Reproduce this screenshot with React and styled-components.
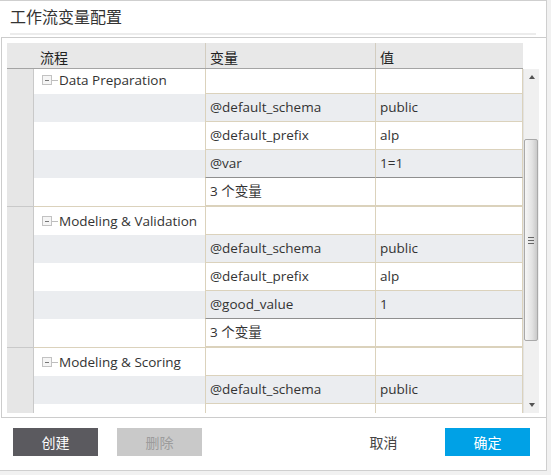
import styled, { createGlobalStyle } from "styled-components";

const GlobalStyle = createGlobalStyle`
  html, body {
    margin: 0;
    padding: 0;
    background: #f1f1f1;
  }
  body {
    font-family: "Open Sans", "Noto Sans CJK SC", sans-serif;
    color: #333;
  }
`;

const groups = [
  {
    name: "Data Preparation",
    vars: [
      ["@default_schema", "public"],
      ["@default_prefix", "alp"],
      ["@var", "1=1"],
    ],
    summary: "3 个变量",
  },
  {
    name: "Modeling & Validation",
    vars: [
      ["@default_schema", "public"],
      ["@default_prefix", "alp"],
      ["@good_value", "1"],
    ],
    summary: "3 个变量",
  },
  {
    name: "Modeling & Scoring",
    vars: [
      ["@default_schema", "public"],
      ["", ""],
    ],
  },
];

const BEIGE = "#dbd2bc";

const Dialog = styled.div`
  box-sizing: border-box;
  width: 547px;
  height: 471px;
  background: #fff;
  border: 1px solid #cfcfcf;
  border-left: none;
  display: flex;
  flex-direction: column;
`;

const Title = styled.div`
  height: 32px;
  line-height: 32px;
  padding-left: 10px;
  font-size: 16px;
  color: #333;
`;

const Divider = styled.div`
  height: 2px;
  width: 526px;
  margin: 0 0 2px 10px;
  background: #ececec;
`;

const Panel = styled.div`
  margin-left: 1px;
  padding: 5px 7px 4px 5px;
  border: 1px solid #cccccc;
  border-right: none;
`;

const Grid = styled.div`
  display: flex;
  flex-direction: column;
  height: 370px;
  width: 532px;
  font-size: 13.5px;
`;

const HeaderRow = styled.div`
  display: flex;
  width: 516px;
  height: 25px;
  background: #e8e8e8;
  border-bottom: 1px solid #a4a4a4;
`;

const HeadCell = styled.div`
  box-sizing: border-box;
  width: ${(p) => p.$w}px;
  padding-left: ${(p) => p.$pad}px;
  padding-top: 2px;
  line-height: 25px;
  font-size: 14px;
  border-left: ${(p) => (p.$line ? "1px solid #d3cdc0" : "none")};
  color: #222;
`;

const Body = styled.div`
  display: flex;
  flex: 1;
  min-height: 0;
`;

const Viewport = styled.div`
  width: 516px;
  overflow: hidden;
`;

const Content = styled.div`
  margin-top: -3px;
`;

const Row = styled.div`
  display: flex;
  height: 28px;
`;

const Gutter = styled.div`
  box-sizing: border-box;
  width: 27px;
  background: #e6e6e6;
  border-right: 1px solid #c9c9c9;
`;

const NameCell = styled.div`
  box-sizing: border-box;
  width: 171px;
  display: flex;
  align-items: center;
  padding-left: 8px;
  background: ${(p) => (p.$stripe ? "#ebedf0" : "#fff")};
  color: #333;
  white-space: nowrap;
`;

const ValueCell = styled.div`
  box-sizing: border-box;
  width: ${(p) => p.$w}px;
  padding-left: 4px;
  line-height: 27px;
  background: ${(p) => (p.$stripe ? "#ebedf0" : "#fff")};
  border-left: 1px solid ${BEIGE};
  border-right: ${(p) => (p.$edge ? `1px solid ${BEIGE}` : "none")};
  border-bottom: 1px solid ${(p) => (p.$last ? "#8f8f8f" : BEIGE)};
  color: #333;
  white-space: nowrap;
`;

const Sep = styled.div`
  display: flex;
  height: 1px;
`;

const SepGutter = styled.div`
  width: 27px;
  background: #c9c9c9;
`;

const SepLine = styled.div`
  flex: 1;
  background: ${BEIGE};
`;

const ToggleBox = styled.span`
  box-sizing: border-box;
  position: relative;
  width: 10px;
  height: 10px;
  border: 1px solid #c2c2c2;
  background: #f5f5f5;
  flex: none;

  &::before {
    content: "";
    position: absolute;
    left: 2px;
    top: 3.5px;
    width: 4px;
    height: 1px;
    background: #777;
  }
`;

const TreeLine = styled.span`
  width: 6px;
  height: 1px;
  background: #bdbdbd;
  margin-right: 1px;
  flex: none;
`;

const ScrollBar = styled.div`
  box-sizing: border-box;
  width: 16px;
  background: #f0f0f0;
  border-left: 1px solid #e2e2e2;
  display: flex;
  flex-direction: column;
`;

const Arrow = styled.div`
  height: 16px;
  display: flex;
  align-items: center;
  justify-content: center;

  &::after {
    content: "";
    border-left: 3.5px solid transparent;
    border-right: 3.5px solid transparent;
    ${(p) =>
      p.$down
        ? "border-top: 4px solid #555;"
        : "border-bottom: 4px solid #555;"}
  }
`;

const Track = styled.div`
  flex: 1;
  display: flex;
  flex-direction: column;
  padding-top: ${(p) => p.$offset}px;
`;

const Thumb = styled.div`
  box-sizing: border-box;
  width: 14px;
  height: 202px;
  border: 1px solid #a9a9a9;
  border-radius: 2px;
  background: linear-gradient(to right, #f6f6f6, #e2e2e2 60%, #c9c9c9);
  display: flex;
  align-items: center;
  justify-content: center;
`;

const Grip = styled.div`
  width: 6px;
  height: 5px;
  border-top: 1px solid #666;
  border-bottom: 1px solid #666;
  position: relative;

  &::after {
    content: "";
    position: absolute;
    left: 0;
    right: 0;
    top: 2px;
    height: 1px;
    background: #666;
  }
`;

const Footer = styled.div`
  flex: 1;
  display: flex;
  align-items: flex-start;
  padding: 10px 16px 0 13px;
  gap: 19px;
`;

const Button = styled.button`
  width: 85px;
  height: 28px;
  border: none;
  padding: 0;
  font-family: "Noto Sans CJK SC", sans-serif;
  font-size: 14px;
  background: ${(p) => p.$bg || "transparent"};
  color: ${(p) => p.$color || "#fff"};
  margin-left: ${(p) => (p.$push ? "auto" : "0")};
`;

const GroupBlock = ({ group }) => {
  const n = group.vars.length;
  return (
    <>
      <Row>
        <Gutter />
        <NameCell>
          <ToggleBox />
          <TreeLine />
          {group.name}
        </NameCell>
        <ValueCell $w={170} />
        <ValueCell $w={148} $edge />
      </Row>
      {group.vars.map(([name, value], i) => {
        const stripe = i % 2 === 0;
        const last = group.summary && i === n - 1;
        return (
          <Row key={i}>
            <Gutter />
            <NameCell $stripe={stripe} />
            <ValueCell $w={170} $stripe={stripe} $last={last}>
              {name}
            </ValueCell>
            <ValueCell $w={148} $edge $stripe={stripe} $last={last}>
              {value}
            </ValueCell>
          </Row>
        );
      })}
      {group.summary && (
        <>
          <Row>
            <Gutter />
            <NameCell />
            <ValueCell $w={170}>{group.summary}</ValueCell>
            <ValueCell $w={148} $edge />
          </Row>
          <Sep>
            <SepGutter />
            <SepLine />
          </Sep>
        </>
      )}
    </>
  );
};

export default function App() {
  return (
    <>
      <GlobalStyle />
      <Dialog>
        <Title>工作流变量配置</Title>
        <Divider />
        <Panel>
          <Grid>
            <HeaderRow>
              <HeadCell $w={27} />
              <HeadCell $w={171} $pad={6}>流程</HeadCell>
              <HeadCell $w={170} $pad={4} $line>变量</HeadCell>
              <HeadCell $w={148} $pad={4} $line>值</HeadCell>
            </HeaderRow>
            <Body>
              <Viewport>
                <Content>
                  {groups.map((g) => (
                    <GroupBlock key={g.name} group={g} />
                  ))}
                </Content>
              </Viewport>
              <ScrollBar>
                <Arrow />
                <Track $offset={54}>
                  <Thumb>
                    <Grip />
                  </Thumb>
                </Track>
                <Arrow $down />
              </ScrollBar>
            </Body>
          </Grid>
        </Panel>
        <Footer>
          <Button $bg="#5b5a5f">创建</Button>
          <Button $bg="#c9c9c9" $color="#9c9c9c">删除</Button>
          <Button $push $color="#444">取消</Button>
          <Button $bg="#00a1e6">确定</Button>
        </Footer>
      </Dialog>
    </>
  );
}
